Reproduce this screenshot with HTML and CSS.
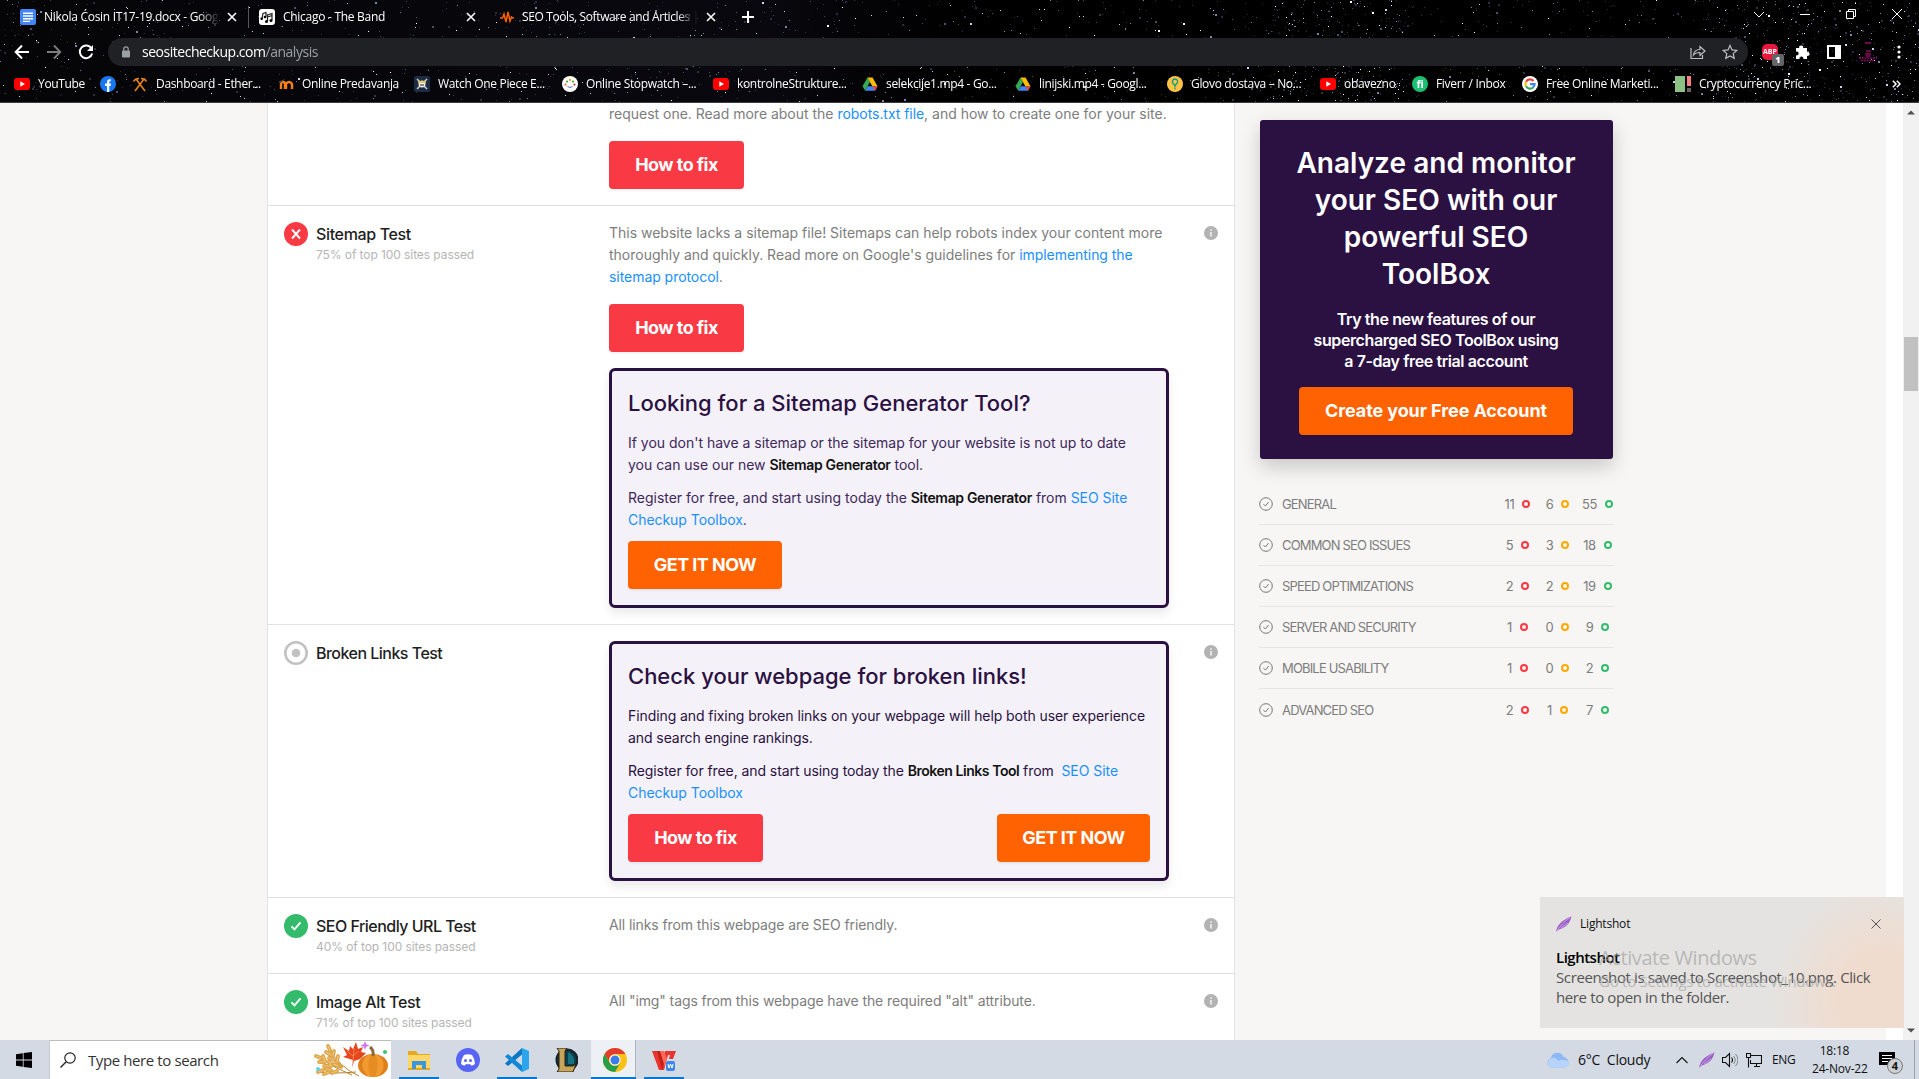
FILE: index.html
```html
<!DOCTYPE html>
<html lang="en">
<head>
<meta charset="utf-8">
<title>SEO Tools, Software and Articles</title>
<link rel="stylesheet" href="styles.css">
</head>
<body>
<svg class="defs" width="0" height="0">
  <symbol id="x" viewBox="0 0 10 10"><path d="M1 1l8 8M9 1l-8 8" fill="none" stroke="currentColor" stroke-width="1.6"/></symbol>
  <symbol id="youtube" viewBox="0 0 16 16"><rect y="2" width="16" height="12" rx="3" fill="#f00"/><path d="M6.3 5.3v5.4L11 8z" fill="#fff"/></symbol>
  <symbol id="drive" viewBox="0 0 16 16"><path d="M5.5 1.500L.5 10.300l2.700 4.400L8 6z" fill="#34a853"/><path d="M5.500 1.500h5l5 8.800h-5.200z" fill="#fbbc04"/><path d="M3.200 14.700l2.500-4.400h9.800l-2.500 4.400z" fill="#4285f4"/><path d="M13 14.700l2.500-4.400h-5.200z" fill="#ea4335"/></symbol>
  <symbol id="info" viewBox="0 0 14 14"><circle cx="7" cy="7" r="7" fill="#b3b3b3"/><path d="M7 6v4.500M7 3.300v1.500" stroke="#fff" stroke-width="1.300"/></symbol>
  <symbol id="pass" viewBox="0 0 24 24"><circle cx="12" cy="12" r="12" fill="#33bb6b"/><path d="M7.500 12.300l3 3 6-7" fill="none" stroke="#fff" stroke-width="1.900"/></symbol>
  <symbol id="check" viewBox="0 0 14 14"><circle cx="7" cy="7" r="6.300" fill="none" stroke="#777" stroke-width="1"/><path d="M4.500 7.100l1.900 1.900 3.200-3.900" fill="none" stroke="#777" stroke-width="1"/></symbol>
  <symbol id="feather" viewBox="0 0 16 16"><path d="M0 16C1 10 4 5 15.500.2 14 7 11 11 3 13.500z" fill="#9a5fc4"/><path d="M0 16C4 10 9 5 15 .5M5 12l7-5" stroke="#d9b9ef" stroke-width=".8" fill="none"/></symbol>
</svg>

<header class="browser">
  <canvas class="stars" id="stars" width="1919" height="102"></canvas>
  <div class="tabs">
    <svg class="i16" viewBox="0 0 16 16"><rect width="16" height="16" rx="2" fill="#4285f4"/><path d="M3 4.200h10M3 7h10M3 9.700h10M3 12.400h7" stroke="#fff" stroke-width="1.400"/></svg>
    <span class="tab fade">Nikola Ćosin IT17-19.docx - Google</span>
    <svg class="close"><use href="#x"/></svg>
    <i class="tab-line"></i>
    <svg class="i16" viewBox="0 0 16 16"><rect width="16" height="16" rx="3" fill="#fff"/><path d="M3 9.500l1-5 3-1v4M8.500 12V6l4.500-1.500V11M8.500 8l4.500-1.500" stroke="#222" fill="none" stroke-width="1.200"/><circle cx="2.700" cy="9.700" r="1.300"/><circle cx="6" cy="8" r="1.300"/><circle cx="7.500" cy="12.500" r="1.500"/><circle cx="12" cy="11.500" r="1.500"/></svg>
    <span class="tab">Chicago - The Band</span>
    <svg class="close"><use href="#x"/></svg>
    <svg class="i16" viewBox="0 0 16 16"><path d="M1 9h2.500L5 5l2 8L9 3l2 9 1.500-4L14 9h1" fill="none" stroke="#ff6200" stroke-width="1.500"/></svg>
    <span class="tab fade seo">SEO Tools, Software and Articles |</span>
    <svg class="close"><use href="#x"/></svg>
    <svg class="plus" viewBox="0 0 12 12"><path d="M6 0v12M0 6h12" stroke="#fff" stroke-width="2"/></svg>
    <div class="window-buttons">
      <svg viewBox="0 0 12 12"><path d="M1 4l5 5 5-5" class="line"/></svg>
      <svg viewBox="0 0 12 12"><path d="M1 6.500h10" class="line"/></svg>
      <svg viewBox="0 0 12 12"><path d="M1.500 3.500h7v7h-7zM3.500 3.500v-2h7v7h-2" class="line"/></svg>
      <svg viewBox="0 0 12 12"><path d="M1 1l10 10M11 1L1 11" class="line"/></svg>
    </div>
  </div>
  <div class="toolbar">
    <svg class="i16" viewBox="0 0 16 16"><path d="M15 8H2M8 1.500L1.700 8 8 14.500" fill="none" stroke="#fff" stroke-width="2"/></svg>
    <svg class="i16" viewBox="0 0 16 16"><path d="M1 8h13M8 1.500L14.300 8 8 14.500" fill="none" stroke="#7d7d80" stroke-width="1.800"/></svg>
    <svg class="i16" viewBox="0 0 16 16"><path d="M13.500 4.500A6.300 6.300 0 1 0 14.200 9.500" fill="none" stroke="#fff" stroke-width="2"/><path d="M15 1v6H9z" fill="#fff"/></svg>
    <div class="omnibox">
      <svg class="lock" viewBox="0 0 8 12"><rect y="4.500" width="8" height="7" rx="1" fill="#9aa0a6"/><path d="M1.800 5V3a2.200 2.200 0 0 1 4.400 0v2" fill="none" stroke="#9aa0a6" stroke-width="1.200"/></svg>
      <span class="url">seositecheckup.com<em>/analysis</em></span>
      <svg class="i16 share" viewBox="0 0 16 16"><path d="M1 4v10.500h11.500V11M3.500 11C4 7 7 5.500 10 5.500V2.500L15 7l-5 4.500V8.500C7 8.500 5 9 3.500 11z" class="soft"/></svg>
      <svg class="i16" viewBox="0 0 16 16"><path d="M8 1.500l2 4.400 4.800.5-3.600 3.200 1 4.700L8 11.900l-4.200 2.400 1-4.700L1.200 6.400 6 5.900z" class="soft"/></svg>
    </div>
    <div class="ext">
      <span class="abp">ABP<b>1</b></span>
      <svg class="i16" viewBox="0 0 16 16"><path d="M2 4h3.200a2 2 0 1 1 3.900 0H13v4a2 2 0 1 1 0 3.800V15H9.300a2 2 0 1 0-3.800 0H2v-3.700a2 2 0 1 0 0-3.800z" fill="#fff"/></svg>
      <svg class="i16" viewBox="0 0 16 16"><path d="M1 1h14v14H1zM3 3v10h6V3z" fill="#fff" fill-rule="evenodd"/></svg>
      <svg class="avatar" viewBox="0 0 20 20"><path d="M7 1h6M8 9h5M7 12h6M8 14h4" stroke="#8c0a63" stroke-width="1.500"/><path d="M1 16h18M3 18.500h14" stroke="#8c0a63" stroke-width="1.500" stroke-dasharray="2 .8"/></svg>
      <svg class="dots" viewBox="0 0 4 16"><circle cx="2" cy="3" r="1.600" fill="#fff"/><circle cx="2" cy="8" r="1.600" fill="#fff"/><circle cx="2" cy="13" r="1.600" fill="#fff"/></svg>
    </div>
  </div>
  <nav class="bookmarks">
    <a><svg class="i16"><use href="#youtube"/></svg>YouTube</a>
    <a><svg class="i16" viewBox="0 0 16 16"><circle cx="8" cy="8" r="8" fill="#1877f2"/><path d="M7 16v-6H5V7.600h2V6c0-2 1.200-3 3.800-2.700v2C9.400 5.200 9.300 5.500 9.300 6.300v1.300h1.700L10.700 10H9.300v6z" fill="#fff"/></svg></a>
    <a><svg class="i16" viewBox="0 0 16 16"><path d="M3 15L12 3M13 15L4 3M1.500 5.500Q3 2.500 7 2.500M14.500 5.500Q13 2.500 9 2.500" fill="none" stroke="#e5821e" stroke-width="1.600"/></svg>Dashboard - Ether...</a>
    <a><svg class="i16" viewBox="0 0 16 16"><path d="M3 13V8q0-2 2-2t2 2v5M8 13V8q1-2 3-2t3 2v5" fill="none" stroke="#f98012" stroke-width="2.400"/><path d="M0 6l7-3-4 4z" fill="#555"/></svg>Online Predavanja</a>
    <a><svg class="i16" viewBox="0 0 16 16"><rect width="16" height="16" rx="2" fill="#1d2b44"/><path d="M3 3l10 10M13 3L3 13" stroke="#ccc" stroke-width="1.500"/><circle cx="8" cy="8" r="3.500" fill="#eee"/><path d="M4 6h8" stroke="#e3c84a" stroke-width="1.800"/><path d="M6 9h4" stroke="#222"/></svg>Watch One Piece E...</a>
    <a><svg class="i16" viewBox="0 0 16 16"><circle cx="8" cy="8" r="8" fill="#fff"/><g stroke-width="2.200" stroke-linecap="round"><path d="M8 3.800v.1" stroke="#f5a400"/><path d="M11 5.500v.1" stroke="#4a3"/><path d="M12.500 8.500v.1" stroke="#d33"/><path d="M5 5.500v.1" stroke="#4a3"/><path d="M3.500 8.500v.1" stroke="#e63"/></g><path d="M5.500 10.500q2.500 2 5 0" stroke="#57a" fill="none"/></svg>Online Stopwatch –...</a>
    <a><svg class="i16"><use href="#youtube"/></svg>kontrolneStrukture...</a>
    <a><svg class="i16"><use href="#drive"/></svg>selekcije1.mp4 - Go...</a>
    <a><svg class="i16"><use href="#drive"/></svg>linijski.mp4 - Googl...</a>
    <a><svg class="i16" viewBox="0 0 16 16"><circle cx="8" cy="8" r="8" fill="#ffc244"/><path d="M8 11.500V9.700L6.200 7.500a2.600 2.600 0 1 1 3.600 0L8 9.700" fill="none" stroke="#00a082" stroke-width="1.300"/><circle cx="8" cy="12.800" r=".8" fill="#00a082"/></svg>Glovo dostava – No...</a>
    <a><svg class="i16"><use href="#youtube"/></svg>obavezno</a>
    <a><span class="fi">fi</span>Fiverr / Inbox</a>
    <a><svg class="i16" viewBox="0 0 16 16"><circle cx="8" cy="8" r="8" fill="#fff"/><g fill="none" stroke-width="2.200"><path d="M11.500 5A4.600 4.600 0 0 0 4 5.700" stroke="#ea4335"/><path d="M4 5.700a4.600 4.600 0 0 0 0 4.600" stroke="#fbbc05"/><path d="M4 10.300a4.600 4.600 0 0 0 7 1.200" stroke="#34a853"/><path d="M11 11.500A4.600 4.600 0 0 0 12.600 8.100H8" stroke="#4285f4"/></g></svg>Free Online Marketi...</a>
    <a><svg class="i16" viewBox="0 0 16 16"><path d="M0 0h10v16H0z" fill="#8dc085"/><path d="M12 0h4v10h-4z" fill="#f88080"/><path d="M12 12h4v4h-4z" fill="#666"/></svg>Cryptocurrency Pric...</a>
    <svg class="more" viewBox="0 0 9 8"><path d="M.8.800L4 4 .8 7.200M4.800.800L8 4 4.800 7.200" fill="none" stroke="#fff" stroke-width="1.500"/></svg>
  </nav>
</header>

<main class="page">
  <section class="tests">
    <article class="test first">
      <div></div>
      <div class="body">
        <p class="text">request one. Read more about the <a>robots.txt file</a>, and how to create one for your site.</p>
        <button class="btn red">How to fix</button>
      </div>
    </article>
    <article class="test">
      <div class="name">
        <svg class="status" viewBox="0 0 24 24"><circle cx="12" cy="12" r="12" fill="#f93943"/><path d="M8 7.500l8 9M16 7.500l-8 9" stroke="#fff" stroke-width="1.900"/></svg>
        <div><h3>Sitemap Test</h3><small>75% of top 100 sites passed</small></div>
      </div>
      <div class="body">
        <p class="text">This website lacks a sitemap file! Sitemaps can help robots index your content more<br>thoroughly and quickly. Read more on Google's guidelines for <a>implementing the</a><br><a>sitemap protocol</a>.</p>
        <button class="btn red">How to fix</button>
        <div class="promo">
          <h2>Looking for a Sitemap Generator Tool?</h2>
          <p>If you don't have a sitemap or the sitemap for your website is not up to date<br>you can use our new <b>Sitemap Generator</b> tool.</p>
          <p>Register for free, and start using today the <b>Sitemap Generator</b> from <a>SEO Site</a><br><a>Checkup Toolbox</a>.</p>
          <div class="actions"><button class="btn orange">GET IT NOW</button></div>
        </div>
      </div>
      <svg class="info"><use href="#info"/></svg>
    </article>
    <article class="test">
      <div class="name">
        <svg class="status" viewBox="0 0 24 24"><circle cx="12" cy="12" r="10.700" fill="none" stroke="#c2c2c2" stroke-width="2.600"/><circle cx="12" cy="12" r="4.300" fill="#c2c2c2"/></svg>
        <div><h3 class="tight">Broken Links Test</h3></div>
      </div>
      <div class="body">
        <div class="promo dark">
          <h2>Check your webpage for broken links!</h2>
          <p>Finding and fixing broken links on your webpage will help both user experience<br>and search engine rankings.</p>
          <p>Register for free, and start using today the <b>Broken Links Tool</b> from &nbsp;<a>SEO Site</a><br><a>Checkup Toolbox</a></p>
          <div class="actions"><button class="btn red">How to fix</button><button class="btn orange">GET IT NOW</button></div>
        </div>
      </div>
      <svg class="info"><use href="#info"/></svg>
    </article>
    <article class="test">
      <div class="name"><svg class="status"><use href="#pass"/></svg><div><h3 class="tight">SEO Friendly URL Test</h3><small>40% of top 100 sites passed</small></div></div>
      <div class="body"><p class="text short">All links from this webpage are SEO friendly.</p></div>
      <svg class="info"><use href="#info"/></svg>
    </article>
    <article class="test">
      <div class="name"><svg class="status"><use href="#pass"/></svg><div><h3>Image Alt Test</h3><small>71% of top 100 sites passed</small></div></div>
      <div class="body"><p class="text short">All "img" tags from this webpage have the required "alt" attribute.</p></div>
      <svg class="info"><use href="#info"/></svg>
    </article>
  </section>

  <aside class="side">
    <div class="cta">
      <h1>Analyze and monitor<br>your SEO with our<br>powerful SEO<br>ToolBox</h1>
      <p>Try the new features of our<br>supercharged SEO ToolBox using<br>a 7-day free trial account</p>
      <button class="btn orange">Create your Free Account</button>
    </div>
    <ul class="summary">
      <li><svg><use href="#check"/></svg><span>GENERAL</span><i class="bad">11</i><i class="warn">6</i><i class="good">55</i></li>
      <li><svg><use href="#check"/></svg><span>COMMON SEO ISSUES</span><i class="bad">5</i><i class="warn">3</i><i class="good">18</i></li>
      <li><svg><use href="#check"/></svg><span>SPEED OPTIMIZATIONS</span><i class="bad">2</i><i class="warn">2</i><i class="good">19</i></li>
      <li><svg><use href="#check"/></svg><span>SERVER AND SECURITY</span><i class="bad">1</i><i class="warn">0</i><i class="good">9</i></li>
      <li><svg><use href="#check"/></svg><span>MOBILE USABILITY</span><i class="bad">1</i><i class="warn">0</i><i class="good">2</i></li>
      <li><svg><use href="#check"/></svg><span>ADVANCED SEO</span><i class="bad">2</i><i class="warn">1</i><i class="good">7</i></li>
    </ul>
  </aside>
  <div class="gutter"></div>
  <div class="scrollbar">
    <svg viewBox="0 0 8 5"><path d="M0 4.500h8L4 .5z" fill="#505050"/></svg>
    <i class="thumb"></i>
    <svg viewBox="0 0 8 5"><path d="M0 .5h8L4 4.500z" fill="#505050"/></svg>
  </div>
</main>

<div class="toast">
  <div class="toast-head"><svg class="i16"><use href="#feather"/></svg><span>Lightshot</span><svg class="toast-x" viewBox="0 0 10 10"><path d="M.5.500l9 9M9.500.500l-9 9" stroke="#555" stroke-width="1"/></svg></div>
  <strong>Lightshot</strong>
  <p>Screenshot is saved to Screenshot_10.png. Click<br>here to open in the folder.</p>
</div>
<div class="watermark"><b>Activate Windows</b><span>Go to Settings to activate Windows.</span></div>

<footer class="taskbar">
  <div class="start"><svg class="i16" viewBox="0 0 16 16"><path d="M0 2.200L6.800 1.200V7.600H0zM7.600 1.100L16 0v7.600H7.600zM0 8.400h6.800v6.400L0 13.800zM7.600 8.400H16V16l-8.400-1.100z"/></svg></div>
  <div class="search">
    <svg class="i16" viewBox="0 0 16 16"><circle cx="10" cy="6" r="5.200" fill="none" stroke="#222" stroke-width="1.200"/><path d="M6.200 9.800L.5 15.500" stroke="#222" stroke-width="1.300"/></svg>
    <span>Type here to search</span>
    <svg class="autumn" viewBox="0 0 74 36">
      <g stroke="#b98329" fill="none" stroke-width="1"><path d="M45 34Q25 25 15 6M38 33Q20 26 2 14M42 30Q20 32 4 30"/></g>
      <g stroke="#dda54a" stroke-width="3.800" stroke-linecap="round"><path d="M14 4l2 4M12 10l5 3M20 9l-1 5M15 16l5 2M24 14l-1 6M19 22l5 2M2 14l5 2M5 20l6 0M9 14l2 5M10 24l6 0M15 19l2 5M4 30l5-2M10 32l5-2M12 27l5 1M18 31l5-2M24 22l3 3"/></g>
      <g stroke="#f1c678" stroke-width="1.200" stroke-linecap="round"><path d="M14 4l2 4M12 10l5 3M20 9l-1 5M15 16l5 2M24 14l-1 6M19 22l5 2M2 14l5 2M5 20l6 0M9 14l2 5M10 24l6 0M15 19l2 5M4 30l5-2M10 32l5-2M12 27l5 1M18 31l5-2"/></g>
      <path d="M38 26l1-8-10-3 4-2-4-8 6 4 1-5 3 3 3-7 2 7 5-2-2 5 5 1-6 6-6 2z" fill="#e5451f"/><path d="M39 20l1-14M39 14l6-5M39 14l-6-5" stroke="#ff9452" stroke-width=".8"/>
      <ellipse cx="59" cy="23.500" rx="15" ry="11.500" fill="#e07f18"/><ellipse cx="59" cy="23.500" rx="10.500" ry="11.500" fill="#f19a30"/><ellipse cx="59" cy="23.500" rx="4.500" ry="11.500" fill="#e58c22"/><path d="M59 14q1-6-3-9" stroke="#8a6a3c" stroke-width="3" fill="none"/>
      <path d="M51-1l1.300 3.200L55.500 3.500l-3.200 1.300L51 8l-1.300-3.200L46.500 3.500l3.200-1.300z" fill="#d575f0"/><circle cx="4" cy="27" r="2" fill="#59d4ec"/><circle cx="71" cy="10" r="2" fill="#43c06b"/>
    </svg>
  </div>
  <div class="apps">
    <div class="app open"><svg viewBox="0 0 24 24"><path d="M1 3h8l2 3h12v16H1z" fill="#e5a91f"/><path d="M1 7h22v13H1z" fill="#ffd667"/><path d="M5 21v-8h14v8h-4v-4H9v4z" fill="#3b97dd"/></svg></div>
    <div class="app"><svg viewBox="0 0 24 24"><circle cx="12" cy="12" r="12" fill="#5865f2"/><path d="M8 7q4-1.500 8 0 3 4 3 9-2 1.500-4 1.500l-1-1.500q-2 .5-4 0l-1 1.500Q7 17.500 5 16q0-5 3-9z" fill="#fff"/><circle cx="9.500" cy="12.500" r="1.500" fill="#5865f2"/><circle cx="14.500" cy="12.500" r="1.500" fill="#5865f2"/></svg></div>
    <div class="app open"><svg viewBox="0 0 24 24"><path d="M17 0l7 3v18l-7 3z" fill="#2ba5ec"/><path d="M17 0v6.500L3 18 0 15.500z" fill="#0a77c4"/><path d="M17 24v-6.500L3 6 0 8.500z" fill="#1289d8"/></svg></div>
    <div class="app"><svg viewBox="0 0 24 24"><circle cx="13" cy="12" r="10.500" fill="#0b3d4c" stroke="#1b2128" stroke-width="2"/><path d="M14 4q7 3 6 12h-6z" fill="#15717e"/><path d="M3 0h10l-2 3v15h8l3-2-3 8H3l2-3V3z" fill="#c8a55a" stroke="#29230f"/></svg></div>
    <div class="app open active"><svg viewBox="0 0 24 24"><circle cx="12" cy="12" r="12" fill="#fbc116"/><path d="M1.600 6A12 12 0 0 1 22.400 6H12a6 6 0 0 0-5.200 9z" fill="#e33b2e"/><path d="M1.600 6A12 12 0 0 0 12 24l5.200-9A6 6 0 0 1 6.800 15z" fill="#269f48"/><circle cx="12" cy="12" r="5.600" fill="#fff"/><circle cx="12" cy="12" r="4.500" fill="#3c7de9"/></svg></div>
    <div class="app open"><svg viewBox="0 0 24 24"><path d="M0 3h7l3 10 3-10h11l-3 8h-4l1-4h-2l-4 15H7z" fill="#e8342c"/><path d="M7 3h5l3 8-3 8z" fill="#ff6a54"/><path d="M5 3h3l4 13-2 6z" fill="#c41f19"/><rect x="14" y="13" width="9" height="10" rx="2" fill="#3f86f5"/><path d="M16 16l1 4 1.500-4 1.500 4 1-4" fill="none" stroke="#fff"/></svg></div>
  </div>
  <div class="tray">
    <svg class="cloud" viewBox="0 0 24 17"><path d="M5 16.500a5 5 0 0 1 0-9.500 6.500 6.500 0 0 1 12.500-1A5.500 5.500 0 0 1 19 16.500z" fill="#8eb8f4"/><path d="M5 16.500a5 5 0 0 1 1-9.500q4-1 6 3 6-3 11.500 1a5 5 0 0 1-4.500 5.500z" fill="#b7d3fb"/></svg>
    <span class="weather">6°C&nbsp; Cloudy</span>
    <svg class="chev" viewBox="0 0 12 8"><path d="M.5 7L6 1.500 11.500 7" class="ink"/></svg>
    <svg class="i16"><use href="#feather"/></svg>
    <svg class="i16" viewBox="0 0 16 16"><path d="M.5 5.500h3l4-4v13l-4-4h-3zM9.500 5.500q2 2.500 0 5" class="ink"/><path d="M11.500 4q3.500 4 0 8M13.500 2q5 6 0 12" fill="none" stroke="#858a91"/></svg>
    <svg class="i16" viewBox="0 0 16 16"><path d="M5 3.500h10.500v8H4.500V8M8 14.500h6M10.500 11.500v3M.500 1.500h4v4h-4zM2.500 5.500v10" class="ink"/></svg>
    <span class="lang">ENG</span>
    <span class="clock">18:18<br>24-Nov-22</span>
    <span class="notes"><svg class="i16" viewBox="0 0 16 16"><path d="M0 0h16v13h-3v3l-3-3H0z"/><path d="M3 3.500h10M3 6.500h10M3 9.500h6" stroke="#fff"/></svg><b>4</b></span>
    <i class="desktop"></i>
  </div>
</footer>
<script src="stars.js"></script>
</body>
</html>
```
FILE: styles.css
```css
*, ::after { box-sizing: border-box; }
body { margin: 0; width: 1919px; height: 1079px; overflow: hidden; display: flex; flex-direction: column; font-family: "Inter", sans-serif; background: #f7f6f4; }
svg { display: block; flex: none; }
.defs { position: absolute; }
p, h1, h2, h3, ul { margin: 0; padding: 0; font-weight: 400; }
i, em { font-style: normal; }
button { border: 0; font: inherit; margin: 0; }
.i16 { width: 16px; height: 16px; }

/* Browser chrome */
.browser { position: relative; flex: none; height: 103px; background: #000; color: #fff; border-bottom: 1px solid #3c3c3f; font: 12px/16px "Open Sans", sans-serif; white-space: nowrap; }
.stars { position: absolute; left: 0; top: 0; }
.tabs, .toolbar, .bookmarks { position: relative; display: grid; align-items: center; }
.tabs { height: 38px; padding: 0 0 4px 20px; grid-template-columns: 24px 183px 21px 11px 24px 183px 33px 23px 184px 36px 1011px 1fr; }
.tab { overflow: hidden; letter-spacing: -.28px; }
.fade { width: 176px; -webkit-mask-image: linear-gradient(90deg, #000 88%, transparent); mask-image: linear-gradient(90deg, #000 88%, transparent); }
.tab.seo { letter-spacing: -.38px; }
.close { width: 10px; height: 10px; }
.tab-line { width: 1px; height: 22px; background: #55565a; }
.plus { width: 12px; height: 12px; }
.window-buttons { display: flex; gap: 34px; padding-bottom: 6px; }
.window-buttons svg { width: 12px; height: 12px; }
.line { fill: none; stroke: #fff; stroke-width: 1; }
.toolbar { height: 28px; padding-left: 14px; grid-template-columns: 32px 32px 30px 1640px 1fr; }
.omnibox { height: 28px; border-radius: 14px; background: #202124; display: flex; align-items: center; padding: 0 10px 0 14px; }
.lock { width: 8px; height: 12px; margin-right: 12px; }
.url { flex: 1; font-size: 14px; letter-spacing: -.48px; }
.url em { color: #9aa0a6; }
.share { margin-right: 16px; }
.soft { fill: none; stroke: #bdc1c6; stroke-width: 1.200; }
.ext { display: flex; align-items: center; gap: 16px; padding-left: 14px; }
.abp { position: relative; width: 16px; height: 16px; background: #e8173d; border-radius: 5px; font: 700 7px/16px "Open Sans", sans-serif; text-align: center; }
.abp b { position: absolute; left: 10px; top: 10px; width: 12px; height: 12px; border-radius: 2px; background: #636569; font-size: 9px; line-height: 12px; }
.avatar { width: 20px; height: 20px; }
.dots { width: 4px; height: 16px; margin-left: 3px; }
.bookmarks { height: 36px; padding-left: 14px; grid-template-columns: 86px 32px 146px 136px 148px 151px 149px 153px 152px 153px 92px 110px 153px 217px 1fr; letter-spacing: -.33px; }
.bookmarks a { display: flex; align-items: center; gap: 8px; }
.fi { width: 16px; height: 16px; border-radius: 8px; background: #1dbf73; font: 700 11px/15px "Open Sans", sans-serif; text-align: center; }
.more { width: 9px; height: 8px; }

/* Page */
.page { flex: 1; min-height: 0; overflow: hidden; display: flex; background: #f7f6f4; }
.tests { width: 968px; margin-left: 267px; background: #fff; border: solid #e2e4e4; border-width: 0 1px; }
.test { display: grid; grid-template-columns: 325px 560px 14px; column-gap: 0; padding: 16px; min-height: 76px; border-top: 1px solid #dee1e1; align-items: start; }
.test.first { border: 0; padding-top: 0; }
.test .info { margin: 4px 0 0 35px; }
.info { width: 14px; height: 14px; }
.name { display: flex; gap: 8px; }
.status { width: 24px; height: 24px; }
.name h3 { font-size: 16px; line-height: 25px; height: 24px; font-weight: 500; color: #1e1e1e; letter-spacing: -.35px; }
.name h3.tight { letter-spacing: -.52px; }
.name small { display: block; font-size: 12px; line-height: 18px; height: 17px; color: #b5b5b5; letter-spacing: -.08px; }
.text, .promo p { font-size: 14px; line-height: 22px; white-space: nowrap; }
.text { color: #7d7d7d; letter-spacing: -.01px; }
.text.short { letter-spacing: -.1px; }
.text a, .promo a { color: #1890ff; letter-spacing: -.05px; }
.btn { display: block; height: 48px; width: 135px; padding: 0; border-radius: 4px; color: #fff; font-weight: 700; font-size: 18px; line-height: 48px; text-align: center; white-space: nowrap; box-shadow: 0 2px 2px #0000000b; letter-spacing: -.55px; }
.red { background: #f93943; }
.orange { background: #ff6200; width: 154px; }
.body > .btn { margin-top: 16px; }
.promo { height: 240px; border: 3px solid #2b1042; border-radius: 6px; background: #f4f2f8; padding: 16px; box-shadow: 0 6px 10px #00000014; color: #40275a; }
.btn + .promo { margin-top: 16px; }
.promo h2 { font-size: 22px; line-height: 32px; font-weight: 500; color: #2b1042; letter-spacing: 0; margin-bottom: 13px; white-space: nowrap; }
.promo p { letter-spacing: -.01px; }
.promo p + p { margin-top: 11px; }
.promo b { font-weight: 600; color: #111; letter-spacing: -.33px; }
.promo.dark { color: #2b1042; }
.dark p { letter-spacing: -.08px; }
.dark b { letter-spacing: -.45px; }
.actions { display: flex; justify-content: space-between; margin-top: 10px; }
.dark .orange { width: 153px; }

/* Sidebar */
.side { width: 355px; margin-left: 24px; padding-top: 17px; }
.cta { width: 353px; height: 339px; margin-left: 1px; border-radius: 3px; background: #2b1042; color: #fff; text-align: center; box-shadow: 0 8px 20px #00000030; padding: 25px 1px 0 0; white-space: nowrap; }
.cta h1 { font-size: 28px; line-height: 37px; font-weight: 600; letter-spacing: .02px; }
.cta p { margin-top: 16px; font-size: 16px; line-height: 21px; font-weight: 600; letter-spacing: -.4px; }
.cta .btn { width: 274px; margin: 15px auto 0; letter-spacing: -.1px; }
.summary { list-style: none; margin-top: 25px; }
.summary li { height: 41px; display: grid; grid-template-columns: 23px 215.5px 40px 40px 40px; align-items: center; border-bottom: 1px solid #e6e5e3; font-size: 13px; color: #7d7d7d; letter-spacing: -.83px; white-space: nowrap; }
.summary li:last-child { border: 0; }
.summary svg { width: 14px; height: 14px; }
.summary i { display: flex; align-items: center; justify-content: center; gap: 8px; letter-spacing: -.4px; }
.summary i::after { content: ""; width: 8px; height: 8px; border: 2px solid; border-radius: 50%; }
.summary .bad::after { border-color: #f93943; }
.summary .warn::after { border-color: #ffa800; }
.summary .good::after { border-color: #33bb6b; }
.gutter { margin-left: auto; width: 17px; background: #fff; }
.scrollbar { width: 16px; background: #f1f1f1; display: flex; flex-direction: column; align-items: center; padding: 7px 0; }
.scrollbar svg { width: 8px; height: 5px; }
.thumb { width: 14px; height: 54px; margin: 222px 0 auto; background: #c1c1c1; }

/* Desktop overlays */
.toast { position: absolute; left: 1540px; top: 897px; width: 364px; height: 131px; padding: 18px 16px; background: radial-gradient(ellipse 115px 125px at 345px 105px, #f0dccf 40%, #f0dccf00), #e4e3e1; font: 15px/20px "Open Sans", sans-serif; color: #555; white-space: nowrap; }
.toast-head { display: flex; align-items: center; height: 18px; font-size: 12px; color: #111; letter-spacing: -.2px; }
.toast-head .i16 { margin-right: 8px; }
.toast-x { width: 10px; height: 10px; margin-left: auto; margin-right: 7px; }
.toast strong { display: block; margin-top: 14px; font-weight: 600; color: #000; letter-spacing: -.5px; }
.toast p { letter-spacing: -.38px; }
.watermark { position: absolute; left: 1599px; top: 944px; display: flex; flex-direction: column; font: 15px/18px "Open Sans", sans-serif; color: #a0a0a0aa; white-space: nowrap; letter-spacing: -.25px; }
.watermark b { font-size: 20px; line-height: 28px; font-weight: 400; letter-spacing: -.4px; }

/* Taskbar */
.taskbar { flex: none; height: 39px; display: flex; background: #d3dae4; color: #111; font: 12px/18px "Open Sans", sans-serif; white-space: nowrap; }
.start { width: 49px; padding: 12px 16px; }
.search { width: 342px; height: 39px; background: #fff; border-top: 1px solid #bbb; border-left: 1px solid #ccc; display: flex; align-items: center; padding: 0 3px 0 10px; gap: 12px; font-size: 15px; color: #333; letter-spacing: -.4px; }
.autumn { width: 74px; height: 36px; margin-left: auto; }
.apps { display: flex; margin-left: 3px; }
.app { width: 49px; height: 39px; display: flex; align-items: center; justify-content: center; position: relative; }
.app svg { width: 24px; height: 24px; }
.open::after { content: ""; position: absolute; left: 5px; right: 4px; bottom: 0; height: 2px; background: #0078d7; }
.active { background: linear-gradient(90deg, transparent 1px, #edf0f4 1px, #edf0f4 45px, #aeb5bf 45px, #aeb5bf 46px, transparent 46px); }
.active::after { left: 1px; right: 3px; }
.tray { margin-left: auto; display: grid; align-items: center; grid-template-columns: 32px 98px 23px 23px 24px 26px 40px 45px 52px 9px; padding-right: 1px; }
.cloud { width: 24px; height: 17px; }
.weather { font-size: 14px; letter-spacing: -.25px; }
.chev { width: 12px; height: 8px; }
.ink { fill: none; stroke: #111; stroke-width: 1.100; }
.lang { letter-spacing: -.4px; }
.clock { text-align: center; letter-spacing: -.2px; }
.notes { position: relative; justify-self: end; width: 24px; height: 16px; margin-right: 6px; }
.notes b { position: absolute; left: 8px; top: 6px; width: 16px; height: 16px; border: 1px solid #777; border-radius: 8px; background: #cdd1d6; font-size: 11px; line-height: 14px; text-align: center; }
.desktop { height: 39px; width: 1px; background: #98a0aa; justify-self: end; margin-right: 3px; }
```
FILE: stars.js
```js
// Star field behind the tab strip and bookmarks bar.
const sky = document.getElementById('stars').getContext('2d');
let seed = 7;
const rnd = () => (seed = (seed * 16807) % 2147483647) / 2147483647;
const shades = ['#ffffff', '#c5d6ee', '#7788a8', '#4a5068', '#2a2c48', '#333640'];
const haze = sky.createLinearGradient(0, 0, 1919, 0);
haze.addColorStop(0, '#050508');
haze.addColorStop(0.4, '#08080e');
haze.addColorStop(0.5, '#000');
sky.fillStyle = haze;
sky.fillRect(0, 0, 1919, 102);
function scatter(count, x, width) {
  for (let n = 0; n < count; n++) {
    const size = rnd() < 0.08 ? 2 : 1;
    sky.fillStyle = shades[Math.floor(Math.pow(rnd(), 0.6) * shades.length)];
    sky.fillRect(Math.floor(x + rnd() * width), Math.floor(rnd() * 102), size, size);
  }
}
scatter(1700, 0, 1919);
scatter(300, 1270, 140);
scatter(350, 1700, 219);
```
